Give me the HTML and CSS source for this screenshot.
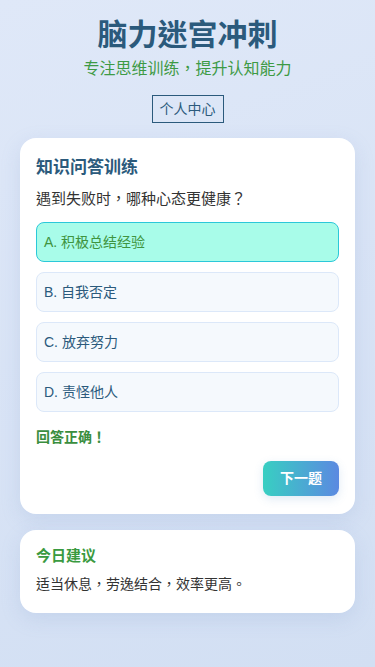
FILE: index.html
```html
<!DOCTYPE html>
<html>
<head>
<meta charset="utf-8">
<meta name="viewport" content="width=device-width, initial-scale=1">
<title>脑力迷宫冲刺</title>
<link rel="stylesheet" href="styles.css">
</head>
<body>
<div class="page">
  <header class="header">
    <h1 class="title">脑力迷宫冲刺</h1>
    <p class="subtitle">专注思维训练，提升认知能力</p>
    <button class="profile-btn">个人中心</button>
  </header>

  <section class="card quiz">
    <h2 class="card-title">知识问答训练</h2>
    <p class="question">遇到失败时，哪种心态更健康？</p>
    <div class="options">
      <div class="option selected">A. 积极总结经验</div>
      <div class="option">B. 自我否定</div>
      <div class="option">C. 放弃努力</div>
      <div class="option">D. 责怪他人</div>
    </div>
    <p class="feedback">回答正确！</p>
    <div class="actions">
      <button class="next-btn">下一题</button>
    </div>
  </section>

  <section class="card tip">
    <h3 class="tip-title">今日建议</h3>
    <p class="tip-text">适当休息，劳逸结合，效率更高。</p>
  </section>
</div>
</body>
</html>
```

FILE: styles.css
```css
* { box-sizing: border-box; }
html, body { margin: 0; padding: 0; }
body {
  font-family: "Liberation Sans", "Noto Sans CJK TC", sans-serif;
  background: linear-gradient(160deg, #dfe8f8 0%, #d2dff3 100%);
  min-height: 667px;
  color: #333;
}
.page {
  padding: 15px 20px 20px;
  display: flex;
  flex-direction: column;
}
.header {
  display: flex;
  flex-direction: column;
  align-items: center;
}
.title {
  margin: 0;
  font-size: 30px;
  line-height: 40px;
  font-weight: 700;
  color: #2b5a7c;
}
.subtitle {
  margin: 4px 0 0;
  font-size: 16px;
  line-height: 20px;
  color: #3d9a45;
}
.profile-btn {
  margin-top: 16px;
  font-family: inherit;
  font-size: 14px;
  line-height: 18px;
  padding: 4px 7px;
  background: transparent;
  border: 1px solid #2b5a7c;
  color: #2b5a7c;
  border-radius: 0;
}
.card {
  background: #fff;
  border-radius: 16px;
  box-shadow: 0 6px 20px rgba(120, 150, 200, 0.18);
  padding: 16px;
}
.quiz { margin-top: 15px; padding-bottom: 18px; }
.card-title {
  margin: 0;
  font-size: 17px;
  line-height: 27px;
  font-weight: 700;
  color: #2b5a7c;
}
.question {
  margin: 7px 0 0;
  font-size: 15px;
  line-height: 22px;
  color: #333;
}
.options {
  margin-top: 12px;
  display: flex;
  flex-direction: column;
  gap: 10px;
}
.option {
  border: 1px solid #dce8f9;
  background: #f5f9fd;
  border-radius: 8px;
  padding: 9px 7px;
  font-size: 14px;
  line-height: 20px;
  color: #2b5a7c;
}
.option.selected {
  background: #a8fce9;
  border-color: #2bc8d9;
  color: #3f9440;
}
.feedback {
  margin: 15px 0 0;
  font-size: 14px;
  line-height: 20px;
  font-weight: 700;
  color: #3a8e3e;
}
.actions {
  margin-top: 14px;
  display: flex;
  justify-content: flex-end;
}
.next-btn {
  font-family: inherit;
  font-size: 14px;
  line-height: 19px;
  font-weight: 700;
  color: #fff;
  border: none;
  border-radius: 8px;
  padding: 8px 17px;
  background: linear-gradient(90deg, #38cfc2 0%, #5b89e1 100%);
  box-shadow: 0 3px 10px rgba(80, 140, 200, 0.18);
}
.tip { margin-top: 16px; padding: 16px 16px 18px; }
.tip-title {
  margin: 0;
  font-size: 15px;
  line-height: 20px;
  font-weight: 700;
  color: #3a9a40;
}
.tip-text {
  margin: 7px 0 0;
  font-size: 14px;
  line-height: 22px;
  color: #333;
}
```
